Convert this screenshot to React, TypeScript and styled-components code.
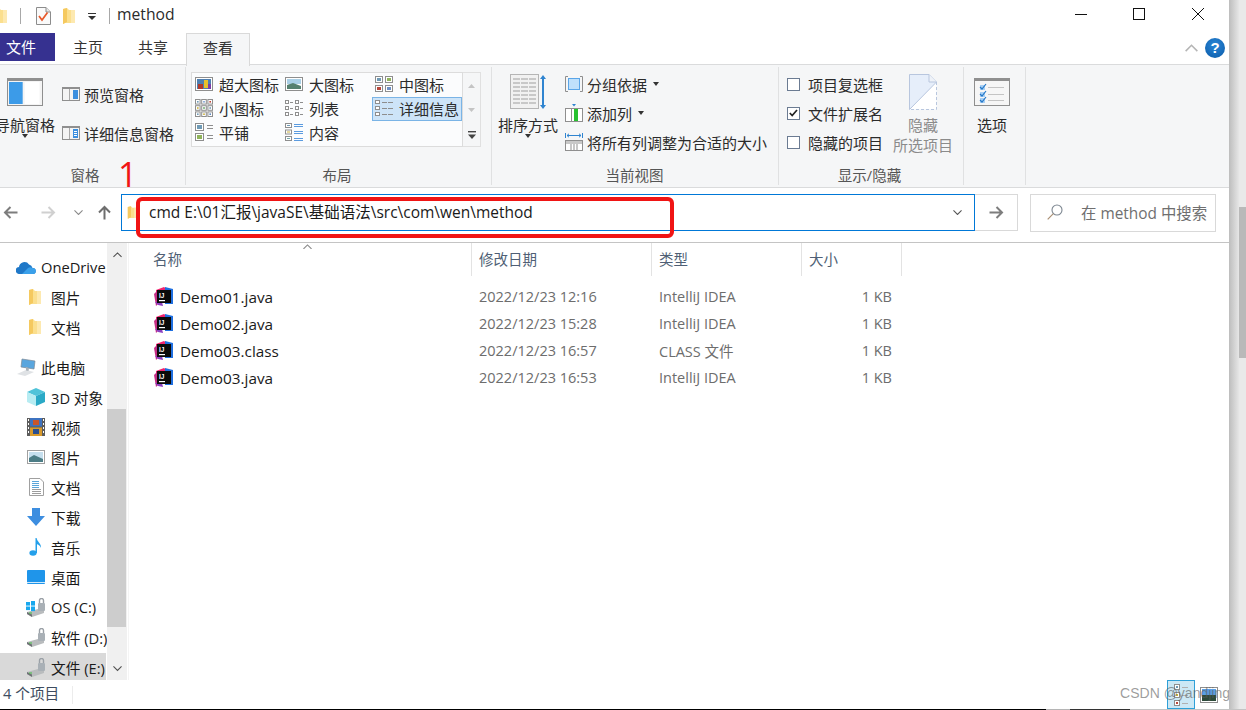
import React from "react";
import styled, { createGlobalStyle } from "styled-components";

const GlobalStyle = createGlobalStyle`
    html, body {
        margin: 0;
        padding: 0;
        background: #fff;
    }
    * {
        box-sizing: border-box;
    }
    svg {
        display: block;
        flex: none;
    }
`;

const Page = styled.div`
    width: 1246px;
    height: 710px;
    overflow: hidden;
    font-family: "Open Sans", "Noto Sans CJK SC", sans-serif;
    font-size: 14.5px;
    color: #222;
`;
const TopArea = styled.div`
    display: flex;
    height: 709px;
`;
const BottomLine = styled.div`
    height: 1px;
    background: linear-gradient(90deg, #000 0 1046px, #b5b5b5 1046px 1070px, #333 1070px 1130px, #c4c4c4 1130px);
`;
const Edge = styled.div`
    width: 17px;
    display: flex;
    background: #e9e9e9;
`;
const EdgeShadow = styled.div`
    width: 10px;
    background: linear-gradient(90deg, #bdbdbd, #e6e6e6);
`;
const EdgeThumb = styled.div`
    width: 7px;
    height: 151px;
    margin-top: 207px;
    background: #b9b9b9;
`;
const Window = styled.div`
    position: relative;
    width: 1229px;
    height: 709px;
    background: #fff;
    display: flex;
    flex-direction: column;
    overflow: hidden;
`;

/* title bar */
const TitleBar = styled.div`
    height: 32px;
    display: flex;
    align-items: center;
    flex: none;
`;
const TitleSep = styled.div<{ $ml: number }>`
    width: 1px;
    height: 16px;
    background: #a8a8a8;
    margin-left: ${(p) => p.$ml}px;
`;
const TitleSlot = styled.div<{ $ml: number }>`
    margin-left: ${(p) => p.$ml}px;
`;
const TitleText = styled.div`
    margin-left: 7px;
    padding-bottom: 4px;
    font-size: 15.7px;
    color: #2b2b2b;
`;
const WinButtons = styled.div`
    margin-left: auto;
    margin-right: 2px;
    display: flex;
    gap: 0;
`;
const WinButton = styled.div<{ $gap?: boolean }>`
    width: 58px;
    height: 28px;
    display: flex;
    align-items: center;
    justify-content: center;
    margin-top: -4px;
    margin-left: ${(p) => (p.$gap ? "1px" : "0")};
`;

/* tabs */
const TabRow = styled.div`
    height: 32px;
    flex: none;
    display: flex;
    align-items: flex-start;
    gap: 1px;
    position: relative;
    z-index: 1;
`;
const FileTab = styled.div`
    width: 55px;
    height: 28px;
    margin-top: 1px;
    background: #363190;
    color: #fff;
    padding-left: 6px;
    line-height: 28px;
    font-size: 15px;
`;
const Tab = styled.div<{ $active?: boolean }>`
    width: 64px;
    height: ${(p) => (p.$active ? "33px" : "28px")};
    margin-top: 1px;
    text-align: center;
    line-height: 29px;
    font-size: 15px;
    color: #333;
    background: ${(p) => (p.$active ? "#f5f6f7" : "transparent")};
    border: ${(p) => (p.$active ? "1px solid #d9d9d9" : "none")};
    border-bottom: none;
`;
const TabRight = styled.div`
    margin-left: auto;
    margin-right: 4px;
    display: flex;
    align-items: center;
    gap: 7px;
    height: 32px;
`;
const HelpBadge = styled.div`
    width: 20px;
    height: 20px;
    border-radius: 50%;
    background: radial-gradient(circle at 50% 35%, #2a86d6, #0a5aa8);
    color: #fff;
    font-family: "Liberation Sans", sans-serif;
    font-weight: 700;
    font-size: 15px;
    line-height: 20px;
    text-align: center;
`;

/* ribbon */
const Ribbon = styled.div`
    height: 124px;
    flex: none;
    display: flex;
    background: #f5f6f7;
    border-top: 1px solid #dadbdc;
    border-bottom: 1px solid #dadbdc;
`;
const Group = styled.div<{ $w: number }>`
    width: ${(p) => p.$w}px;
    display: flex;
    flex-direction: column;
    position: relative;
    &::after {
        content: "";
        position: absolute;
        right: 0;
        top: 2px;
        bottom: 2px;
        width: 1px;
        background: #e0e1e2;
    }
`;
const GroupBody = styled.div`
    height: 98px;
    display: flex;
    align-items: flex-start;
`;
const GroupLabel = styled.div<{ $pr: number }>`
    flex: 1;
    text-align: center;
    padding: 2px ${(p) => p.$pr}px 0 0;
    font-size: 14.5px;
    line-height: 22px;
    color: #555;
`;
const BigButton = styled.div<{ $ml: number; $muted?: boolean; $w?: number }>`
    width: ${(p) => p.$w ?? 60}px;
    margin-left: ${(p) => p.$ml}px;
    flex: none;
    display: flex;
    flex-direction: column;
    align-items: center;
    padding-top: 4px;
    font-size: 15px;
    line-height: 20px;
    white-space: nowrap;
    text-align: center;
    color: ${(p) => (p.$muted ? "#8b8b8b" : "#2b2b2b")};
`;
const BigIconSlot = styled.div`
    height: 46px;
    flex: none;
    display: flex;
    align-items: flex-start;
    justify-content: center;
`;
const Caret = styled.span`
    display: block;
    flex: none;
    width: 0;
    height: 0;
    border-left: 3.5px solid transparent;
    border-right: 3.5px solid transparent;
    border-top: 4px solid #333;
`;
const BigCaret = styled(Caret)`
    margin-top: -1px;
`;
const BigIconPad = styled.div<{ $top: number }>`
    padding-top: ${(p) => p.$top}px;
`;
const SmallCol = styled.div<{ $ml: number; $top: number; $gap: number }>`
    margin-left: ${(p) => p.$ml}px;
    padding-top: ${(p) => p.$top}px;
    display: flex;
    flex-direction: column;
    gap: ${(p) => p.$gap}px;
`;
const SmallRow = styled.div`
    height: 24px;
    display: flex;
    align-items: center;
    gap: 4px;
    padding-bottom: 2px;
    font-size: 15px;
    color: #2b2b2b;
    white-space: nowrap;
`;
const RowCaret = styled(Caret)`
    margin-left: 2px;
`;
const LayoutBox = styled.div`
    margin: 7px 0 0 5px;
    width: 272px;
    height: 75px;
    display: grid;
    grid-template-columns: repeat(3, 90px);
    grid-auto-rows: 24px;
    background: #fbfcfd;
    border: 1px solid #dcdcdc;
`;
const LayoutItem = styled.div<{ $selected?: boolean }>`
    display: flex;
    align-items: center;
    gap: 6px;
    padding: 0 0 2px 2px;
    font-size: 15px;
    color: #2b2b2b;
    white-space: nowrap;
    background: ${(p) => (p.$selected ? "#cde4f8" : "transparent")};
    border: 1px solid ${(p) => (p.$selected ? "#7ab4e6" : "transparent")};
`;
const LayoutScroll = styled.div`
    margin-top: 7px;
    width: 18px;
    height: 75px;
    display: grid;
    grid-template-rows: 25px 24px 26px;
    border: 1px solid #e0e0e0;
    border-left: none;
`;
const ScrollCell = styled.div`
    display: flex;
    align-items: center;
    justify-content: center;
`;
const CheckCol = styled.div`
    width: 105px;
    margin-left: 8px;
    flex: none;
    padding-top: 8px;
    display: flex;
    flex-direction: column;
    gap: 5px;
`;
const CheckRow = styled.div`
    height: 24px;
    display: flex;
    align-items: center;
    gap: 8px;
    padding-bottom: 2px;
    font-size: 15px;
    color: #2b2b2b;
    white-space: nowrap;
`;
const CheckBox = styled.span`
    display: flex;
    align-items: center;
    justify-content: center;
    flex: none;
    width: 13px;
    height: 13px;
    background: #fff;
    border: 1px solid #6b7b92;
`;

/* address row */
const AddressRow = styled.div`
    height: 55px;
    flex: none;
    display: flex;
    align-items: flex-start;
    padding-top: 6px;
    border-bottom: 1px solid #c4c4c4;
`;
const NavSlot = styled.div<{ $ml: number }>`
    margin-left: ${(p) => p.$ml}px;
    height: 37px;
    display: flex;
    align-items: center;
`;
const AddressBox = styled.div`
    margin-left: 9px;
    width: 854px;
    height: 37px;
    display: flex;
    align-items: center;
    border: 1px solid #0078d7;
    padding: 0 12px 0 5px;
`;
const AddressText = styled.div`
    margin-left: 11px;
    flex: 1;
    font-size: 15.5px;
    color: #1a1a1a;
    padding-bottom: 2px;
    white-space: nowrap;
`;
const GoButton = styled.div`
    width: 43px;
    height: 37px;
    display: flex;
    align-items: center;
    justify-content: center;
    border: 1px solid #d9d9d9;
    border-left: none;
`;
const SearchBox = styled.div`
    margin-left: 12px;
    width: 186px;
    height: 38px;
    display: flex;
    align-items: center;
    padding: 0 0 2px 16px;
    gap: 18px;
    border: 1px solid #d9d9d9;
    font-size: 15.4px;
    color: #6f6f6f;
    white-space: nowrap;
`;

/* main */
const Main = styled.div`
    height: 437px;
    flex: none;
    display: flex;
`;
const Sidebar = styled.div`
    width: 107px;
    flex: none;
    overflow: hidden;
    padding-top: 10px;
`;
const TreeRow = styled.div<{ $indent: number; $gap: number; $selected?: boolean; $space?: boolean }>`
    height: 30px;
    display: flex;
    align-items: center;
    padding: 0 0 2px ${(p) => p.$indent}px;
    gap: ${(p) => p.$gap}px;
    margin-top: ${(p) => (p.$space ? "10px" : "0")};
    font-size: 14.7px;
    color: #1a1a1a;
    white-space: nowrap;
    background: ${(p) => (p.$selected ? "#d9d9d9" : "transparent")};
    width: ${(p) => (p.$selected ? "106px" : "auto")};
`;
const IconBox = styled.div`
    width: 20px;
    display: flex;
    justify-content: center;
    flex: none;
`;
const Scrollbar = styled.div`
    width: 20px;
    flex: none;
    display: flex;
    flex-direction: column;
    background: #f0f0f0;
`;
const ScrollArrow = styled.div<{ $h: number }>`
    height: ${(p) => p.$h}px;
    display: flex;
    align-items: center;
    justify-content: center;
    padding-top: 2px;
`;
const ScrollThumb = styled.div`
    width: 19px;
    height: 218px;
    margin-top: 144px;
    margin-bottom: auto;
    background: #cdcdcd;
`;
const FileArea = styled.div`
    flex: 1;
    margin-left: 1px;
    border-left: 1px solid #f4f4f4;
`;
const HeaderRow = styled.div`
    position: relative;
    display: grid;
    grid-template-columns: 343px 180px 150px 100px;
    height: 32px;
    margin-bottom: 8px;
    font-size: 14.5px;
    color: #4f5f75;
`;
const HeaderCell = styled.div<{ $first?: boolean }>`
    padding-left: ${(p) => (p.$first ? "24px" : "7px")};
    line-height: 33px;
    border-right: 1px solid #e3e3e3;
`;
const SortMark = styled.div`
    position: absolute;
    left: 174px;
    top: 1px;
`;
const FileRow = styled.div`
    display: grid;
    grid-template-columns: 343px 180px 150px 90px;
    height: 27px;
    align-items: center;
    font-size: 14.5px;
    color: #6d6d6d;
`;
const NameCell = styled.div`
    display: flex;
    align-items: center;
    gap: 6px;
    padding-left: 25px;
    color: #1a1a1a;
    font-size: 15.3px;
`;
const DataCell = styled.div`
    padding-left: 7px;
    white-space: nowrap;
`;
const SizeCell = styled.div`
    text-align: right;
`;

/* status */
const StatusBar = styled.div`
    flex: 1;
    display: flex;
    align-items: center;
    padding: 0 11px 0 3px;
    font-size: 14.7px;
    color: #3d4c60;
`;
const StatusText = styled.div`
    padding-bottom: 4px;
`;
const StatusSep = styled.div`
    width: 1px;
    height: 18px;
    background: #ececec;
    margin-left: 13px;
`;
const ViewToggle = styled.div`
    margin-left: auto;
    width: 28px;
    height: 29px;
    display: flex;
    align-items: center;
    justify-content: center;
    background: #cce8f5;
    border: 1px solid #2ea0d8;
`;
const ViewPlain = styled.div`
    margin-left: 5px;
    width: 18px;
    display: flex;
    justify-content: center;
`;

/* things drawn over the screenshot */
const RedBox = styled.div`
    position: absolute;
    left: 136px;
    top: 197px;
    width: 538px;
    height: 41px;
    border: 4px solid #f01414;
    border-radius: 6px;
    pointer-events: none;
`;
const RedNumber = styled.div`
    position: absolute;
    left: 118px;
    top: 155px;
    font-family: "Open Sans", sans-serif;
    font-size: 34px;
    line-height: 38px;
    color: #f01414;
`;
const Watermark = styled.div`
    position: absolute;
    right: -1px;
    top: 684px;
    font-family: "Liberation Sans", sans-serif;
    font-size: 14px;
    line-height: 18px;
    color: rgba(90, 90, 90, 0.6);
    white-space: nowrap;
`;

/* icons */
function Folder({ w = 14, h = 16 }: { w?: number; h?: number }) {
    return (
        <svg width={w} height={h} viewBox="0 0 14 16">
            <path d="M1 1 L5 0 L7 2 L13 2 V15 H3 L1 16 Z" fill="#fbdf8e" />
            <path d="M1 1 L5 0 V14 L1 16 Z" fill="#f5c95f" />
            <path d="M9 2 H13 V15 H9 Z" fill="#fde9b0" />
        </svg>
    );
}

function NoteCheck() {
    return (
        <svg width="15" height="18" viewBox="0 0 15 18">
            <path d="M.5.5 H10 L14.5 5 V17.5 H.5 Z" fill="#fafafa" stroke="#8c8c8c" />
            <path d="M10 .5 V5 H14.5" fill="#e8e8e8" stroke="#8c8c8c" />
            <path d="M3 9 L6 13 L11.5 5.5" fill="none" stroke="#e8592b" strokeWidth="1.7" />
        </svg>
    );
}

function PaneIcon({ w, h, side }: { w: number; h: number; side: "left" | "right" | "detail" }) {
    const top = h > 20 ? 3 : 2;
    return (
        <svg width={w} height={h} viewBox={`0 0 ${w} ${h}`}>
            <rect x=".5" y=".5" width={w - 1} height={h - 1} fill="#f4f4f4" stroke="#8f8f8f" />
            <rect x="0" y="0" width={w} height={top} fill="#8f8f8f" />
            {side === "left" && <rect x="2" y={top + 1} width={w * 0.38} height={h - top - 3} fill="#3c9be8" />}
            {side === "left" && <rect x={w * 0.38 + 4} y={top + 1} width={w * 0.58 - 6} height={h - top - 3} fill="#fff" />}
            {side !== "left" && <rect x="7" y={top} width="1" height={h - top - 1} fill="#a9a9a9" />}
            {side !== "left" && <rect x={w - 7} y={top + 1} width="5" height={h - top - 3} fill="#3c8fdf" />}
            {side === "detail" && <rect x={w - 6} y={top + 3} width="3" height="1" fill="#fff" />}
            {side === "detail" && <rect x={w - 6} y={top + 5} width="3" height="1" fill="#fff" />}
            {side === "detail" && <rect x={w - 6} y={top + 7} width="3" height="1" fill="#fff" />}
        </svg>
    );
}

function Pic({ x, y, w, h, c }: { x: number; y: number; w: number; h: number; c: string }) {
    return (
        <g>
            <rect x={x + 0.5} y={y + 0.5} width={w - 1} height={h - 1} fill="#fff" stroke="#8e8e8e" />
            <rect x={x + 2} y={y + 2} width={w - 4} height={h - 4} fill={c} />
        </g>
    );
}

const lineColor = "#8e8e8e";
function Lines({ x, ys, w, c = lineColor }: { x: number; ys: number[]; w: number; c?: string }) {
    return (
        <g>
            {ys.map((y) => (
                <rect key={y} x={x} y={y} width={w} height="1" fill={c} />
            ))}
        </g>
    );
}

function HugeIcon() {
    return (
        <svg width="18" height="14" viewBox="0 0 18 14">
            <rect x=".5" y=".5" width="17" height="13" fill="#fff" stroke="#8e8e8e" />
            <rect x="2" y="2" width="14" height="10" fill="#4f7fb0" />
            <rect x="3" y="7" width="5" height="5" fill="#b0392c" />
            <rect x="9" y="3" width="4" height="8" fill="#e8c12c" />
            <rect x="13" y="7" width="3" height="5" fill="#7a3ea8" />
        </svg>
    );
}
function LargeIcon() {
    return (
        <svg width="18" height="14" viewBox="0 0 18 14">
            <rect x=".5" y=".5" width="17" height="13" fill="#fff" stroke="#8e8e8e" />
            <rect x="2" y="2" width="14" height="5" fill="#a9cfe6" />
            <path d="M2 8 L8 6 L16 9 V12 H2 Z" fill="#55806f" />
        </svg>
    );
}
function MediumIcon() {
    return (
        <svg width="18" height="16" viewBox="0 0 18 16">
            <Pic x={0} y={0} w={8} h={7} c="#6f9ab5" />
            <Pic x={10} y={0} w={8} h={7} c="#8fb35a" />
            <Pic x={0} y={9} w={8} h={7} c="#b8483c" />
            <Pic x={10} y={9} w={8} h={7} c="#6d8fc5" />
        </svg>
    );
}
function SmallIcon() {
    const cells = ["#6f9ab5", "#7b9fd0", "#c0463a", "#c9b03a", "#5aa05a", "#6f9ab5", "#6f9ab5", "#c9b03a", "#5d88c0"];
    return (
        <svg width="18" height="18" viewBox="0 0 18 18">
            {cells.map((c, i) => (
                <Pic key={i} x={(i % 3) * 6.2} y={Math.floor(i / 3) * 6.2} w={5.6} h={5.6} c={c} />
            ))}
        </svg>
    );
}
function ListIcon() {
    return (
        <svg width="18" height="16" viewBox="0 0 18 16">
            {[0, 10].map((x) => (
                <g key={x}>
                    <Pic x={x} y={0} w={4} h={4} c="#7aa" />
                    <Pic x={x} y={6} w={4} h={4} c="#c9b03a" />
                    <Pic x={x} y={12} w={4} h={4} c="#b8483c" />
                    <Lines x={x + 5} ys={[2, 8, 14]} w={3} />
                </g>
            ))}
        </svg>
    );
}
function DetailIcon() {
    return (
        <svg width="18" height="16" viewBox="0 0 18 16">
            <Pic x={0} y={0} w={5} h={4} c="#7aa" />
            <Pic x={0} y={6} w={5} h={4} c="#c9b03a" />
            <Pic x={0} y={12} w={5} h={4} c="#b8483c" />
            <Lines x={7} ys={[2, 8, 14]} w={5} />
            <Lines x={13} ys={[2, 8, 14]} w={5} />
        </svg>
    );
}
function TileIcon() {
    return (
        <svg width="18" height="18" viewBox="0 0 18 18">
            <Pic x={0} y={0} w={9} h={8} c="#6f9ab5" />
            <Pic x={0} y={10} w={9} h={8} c="#8fb35a" />
            <Lines x={12} ys={[2, 5, 12, 15]} w={6} />
        </svg>
    );
}
function ContentIcon() {
    return (
        <svg width="18" height="18" viewBox="0 0 18 18">
            <Pic x={0} y={0} w={7} h={5} c="#6f9ab5" />
            <Pic x={0} y={6.5} w={7} h={5} c="#c9b03a" />
            <Pic x={0} y={13} w={7} h={5} c="#7aa" />
            <Lines x={9} ys={[1, 3, 8, 10, 15, 17]} w={9} c="#5b9bdf" />
        </svg>
    );
}

function SortIcon() {
    return (
        <svg width="36" height="36" viewBox="0 0 36 36">
            <rect x=".5" y=".5" width="28" height="34" fill="#f1f1f1" stroke="#b5b5b5" />
            {[4, 8, 12, 16, 20, 24, 28].map((y) => (
                <g key={y}>
                    <rect x="3" y={y} width="7" height="2" fill="#c8c8c8" />
                    <rect x="11" y={y} width="7" height="2" fill="#c8c8c8" />
                    <rect x="19" y={y} width="7" height="2" fill="#c8c8c8" />
                </g>
            ))}
            <path d="M33 1 L36 5 H34 V31 H36 L33 35 L30 31 H32 V5 H30 Z" fill="#2f84d0" />
        </svg>
    );
}
function GroupByIcon() {
    return (
        <svg width="18" height="16" viewBox="0 0 18 16">
            <path d="M3 .5 H.5 V15.5 H3 M15 .5 H17.5 V15.5 H15" fill="none" stroke="#8f8f8f" />
            <rect x="3.5" y="2.5" width="11" height="11" fill="#bfe0fb" stroke="#5aa5e8" />
        </svg>
    );
}
function AddColumnIcon() {
    return (
        <svg width="18" height="18" viewBox="0 0 18 18">
            <path d="M7 0 H11 L9 2.5 Z" fill="#2f84d0" />
            <rect x=".5" y="4.5" width="17" height="13" fill="#fff" stroke="#8f8f8f" />
            <rect x="9" y="5" width="4" height="12" fill="#27c12f" />
            <rect x="6" y="5" width="1" height="12" fill="#8f8f8f" />
        </svg>
    );
}
function FitColumnsIcon() {
    return (
        <svg width="18" height="18" viewBox="0 0 18 18">
            <path d="M.5 0 V5 M17.5 0 V5 M2 2.5 H16 M4 .8 L2 2.5 L4 4.2 M14 .8 L16 2.5 L14 4.2" fill="none" stroke="#2f84d0" />
            <rect x=".5" y="7.5" width="17" height="10" fill="#fff" stroke="#8f8f8f" />
            <rect x="1" y="8" width="16" height="3" fill="#c8c8c8" />
            <path d="M6 11 V17 M9 11 V17 M12 11 V17" stroke="#8f8f8f" />
        </svg>
    );
}
function HiddenPageIcon() {
    return (
        <svg width="28" height="36" viewBox="0 0 28 36">
            <path d="M.5 35.5 V.5 H20 L27.5 8 V35.5 Z" fill="#e6eefa" />
            <path d="M.5 35.5 L27.5 8 V35.5 Z" fill="#fff" />
            <path d="M.5 35.5 V.5 H20 L27.5 8" fill="none" stroke="#b8c6de" />
            <path d="M27.5 8 V35.5 H.5" fill="none" stroke="#b8c6de" strokeDasharray="3 2" />
            <path d="M20 .5 V8 H27.5" fill="#eef2f8" stroke="#b8c6de" />
            <path d="M.5 35.5 L27.5 8" stroke="#b8c6de" />
        </svg>
    );
}
function OptionsIcon() {
    return (
        <svg width="36" height="28" viewBox="0 0 36 28">
            <rect x=".5" y=".5" width="35" height="27" fill="#f6f6f6" stroke="#8f8f8f" />
            <rect x="0" y="0" width="36" height="3" fill="#8f8f8f" />
            {[7, 14, 20].map((y) => (
                <g key={y}>
                    <rect x="6" y={y} width="5" height="5" fill="#a8d0f5" />
                    <path d={`M6 ${y + 2} L8 ${y + 4} L12 ${y - 1}`} fill="none" stroke="#2678c8" strokeWidth="1.2" />
                    <rect x="14" y={y + 2} width="16" height="1" fill="#c4c4c4" />
                </g>
            ))}
        </svg>
    );
}

function ArrowIcon({ dir, color }: { dir: "left" | "right" | "up"; color: string }) {
    const rot = dir === "left" ? 0 : dir === "right" ? 180 : 90;
    return (
        <svg width="15" height="15" viewBox="0 0 15 15">
            <path
                d="M14.5 7.5 H2 M7.5 2 L2 7.5 L7.5 13"
                fill="none"
                stroke={color}
                strokeWidth="2"
                transform={`rotate(${rot} 7.5 7.5)`}
            />
        </svg>
    );
}
function Chevron({ up, color = "#6a6a6a", w = 9 }: { up?: boolean; color?: string; w?: number }) {
    return (
        <svg width={w} height={w * 0.6} viewBox="0 0 10 6">
            <path d={up ? "M.5 5.5 L5 1 L9.5 5.5" : "M.5 .5 L5 5 L9.5 .5"} fill="none" stroke={color} strokeWidth="1.2" />
        </svg>
    );
}
function SearchIcon() {
    return (
        <svg width="16" height="16" viewBox="0 0 16 16">
            <circle cx="10" cy="6" r="5" fill="none" stroke="#7d8791" strokeWidth="1.1" />
            <path d="M6.3 9.7 L.7 15.3" stroke="#a98f73" strokeWidth="1.2" />
        </svg>
    );
}
function IdeaIcon() {
    return (
        <svg width="20" height="20" viewBox="0 0 20 20">
            <path d="M2 3 L10 0 L14 3 L2 12 Z" fill="#f0246e" />
            <path d="M0 7 L4 3 L5 16 L2 19 Z" fill="#c42f86" />
            <path d="M11 0 L19 2 L19 17 L11 17 Z" fill="#1f6fe0" />
            <path d="M1 15 L4 18 L9 19 L8 15 Z" fill="#8a3fc0" />
            <rect x="3" y="3" width="14" height="13" fill="#0a0a0a" />
            <text x="5" y="10.5" fontFamily="Liberation Sans, sans-serif" fontSize="6.5" fontWeight="700" fill="#fff">
                IJ
            </text>
            <rect x="5" y="13" width="6" height="1.2" fill="#fff" />
        </svg>
    );
}
function CloudIcon() {
    return (
        <svg width="20" height="13" viewBox="0 0 20 13">
            <path d="M3.5 13 A3.5 3.5 0 0 1 3 6 A5.5 5.5 0 0 1 13 3.5 A4.5 4.5 0 0 1 16.5 7 A3 3 0 0 1 17 13 Z" fill="#1f78c8" />
            <path d="M6 13 L12 7 A4 4 0 0 1 16.5 7 A3 3 0 0 1 17 13 Z" fill="#3aa0ea" />
        </svg>
    );
}
function PcIcon() {
    return (
        <svg width="20" height="18" viewBox="0 0 20 18">
            <path d="M6 1 L19 3 L18 11 L5 9 Z" fill="#5aa6de" stroke="#7d8a96" strokeWidth=".7" />
            <path d="M1 16 L10 12 L18 14 L9 18 Z" fill="#dfe2e5" />
            <path d="M10 9 L13 10 L12.5 13 L10 12.5 Z" fill="#a9b1b8" />
        </svg>
    );
}
function CubeIcon() {
    return (
        <svg width="18" height="18" viewBox="0 0 18 18">
            <path d="M9 0 L18 4 L9 8 L0 4 Z" fill="#4fc3d9" />
            <path d="M0 4 L9 8 V18 L0 14 Z" fill="#b7ecf2" />
            <path d="M18 4 L9 8 V18 L18 14 Z" fill="#2aa9c6" />
        </svg>
    );
}
function VideoIcon() {
    return (
        <svg width="18" height="18" viewBox="0 0 18 18">
            <rect width="18" height="18" fill="#5c5c5c" />
            <rect x="3" y="0" width="12" height="8.5" fill="#3e73c0" />
            <rect x="3" y="9.5" width="12" height="8.5" fill="#d89a2c" />
            <rect x="6" y="2" width="6" height="5" fill="#c9562c" />
            <rect x="6" y="11" width="6" height="5" fill="#2a4f90" />
            {[1, 5, 9, 13].map((y) => (
                <g key={y}>
                    <rect x="1" y={y} width="1" height="2" fill="#fff" />
                    <rect x="16" y={y} width="1" height="2" fill="#fff" />
                </g>
            ))}
        </svg>
    );
}
function PictureIcon() {
    return (
        <svg width="18" height="14" viewBox="0 0 18 14">
            <rect x=".5" y=".5" width="17" height="13" fill="#fff" stroke="#a0a0a0" />
            <rect x="2" y="2" width="14" height="10" fill="#c5dfee" />
            <path d="M2 8 L7 5 L16 9 V12 H2 Z" fill="#4c7d86" />
        </svg>
    );
}
function DocIcon() {
    return (
        <svg width="15" height="18" viewBox="0 0 15 18">
            <path d="M.5.5 H11 L14.5 4 V17.5 H.5 Z" fill="#fff" stroke="#a0a0a0" />
            <Lines x={3} ys={[3, 5, 7, 9]} w={7} c="#5ba5d8" />
            <Lines x={3} ys={[11, 13, 15]} w={9} c="#9c9c9c" />
        </svg>
    );
}
function DownloadIcon() {
    return (
        <svg width="18" height="18" viewBox="0 0 18 18">
            <path d="M5 0 H13 V8 H18 L9 18 L0 8 H5 Z" fill="#3d8ee0" />
        </svg>
    );
}
function MusicIcon() {
    return (
        <svg width="14" height="18" viewBox="0 0 14 18">
            <ellipse cx="4" cy="15" rx="3.6" ry="2.8" fill="#24a0ea" />
            <path d="M6.5 15 V0 H7.6 C8 4 12.5 5 12 10 C11 7 9 6.5 8 6.2 V15 Z" fill="#24a0ea" />
        </svg>
    );
}
function DesktopIcon() {
    return (
        <svg width="18" height="14" viewBox="0 0 18 14">
            <rect width="18" height="14" rx="1" fill="#1f95ea" />
            <rect x="0" y="12" width="18" height="1" fill="#cfe9fb" />
        </svg>
    );
}
function DriveIcon({ windows }: { windows?: boolean }) {
    return (
        <svg width="20" height="19" viewBox="0 0 20 19">
            <path d="M1 14 L12 11 L18 13 V15 L6 19 L1 16 Z" fill="#b9bcbe" />
            <path d="M1 14 L6 16.5 V19 L1 16 Z" fill="#6f7275" />
            <rect x="3" y="14.5" width="3" height="1" fill="#47c447" />
            <rect x="12" y="5" width="7" height="8" rx="1" fill="#a9b0b6" />
            <path d="M13.5 5 V2.5 A2 2 0 0 1 17.5 2.5 V5" fill="none" stroke="#9aa0a6" strokeWidth="1.4" />
            {windows && (
                <g fill="#19a8ee">
                    <rect x="0" y="4" width="4" height="3.6" />
                    <rect x="5" y="3" width="4" height="4.6" />
                    <rect x="0" y="8.5" width="4" height="3.6" />
                    <rect x="5" y="8.5" width="4" height="4.6" />
                </g>
            )}
        </svg>
    );
}
function ToggleDetail() {
    return (
        <svg width="14" height="22" viewBox="0 0 14 22">
            <Pic x={0} y={0} w={6} h={6} c="#6f9ab5" />
            <Pic x={0} y={8} w={6} h={6} c="#c9b03a" />
            <Pic x={0} y={16} w={6} h={6} c="#b8483c" />
            <Lines x={8} ys={[3, 11, 19]} w={6} c="#b0b0b0" />
        </svg>
    );
}
function ToggleThumb() {
    return (
        <svg width="18" height="16" viewBox="0 0 18 16">
            <rect x=".5" y=".5" width="17" height="15" fill="#fff" stroke="#8e8e8e" />
            <rect x="2" y="2" width="14" height="6" fill="#5a9fe6" />
            <rect x="2" y="8" width="14" height="6" fill="#2d4a3a" />
        </svg>
    );
}

const layoutItems: { label: string; icon: React.ReactNode; selected?: boolean }[] = [
    { label: "超大图标", icon: <HugeIcon /> },
    { label: "大图标", icon: <LargeIcon /> },
    { label: "中图标", icon: <MediumIcon /> },
    { label: "小图标", icon: <SmallIcon /> },
    { label: "列表", icon: <ListIcon /> },
    { label: "详细信息", icon: <DetailIcon />, selected: true },
    { label: "平铺", icon: <TileIcon /> },
    { label: "内容", icon: <ContentIcon /> },
];

const treeItems: { label: string; icon: React.ReactNode; indent: number; gap: number; selected?: boolean; space?: boolean }[] = [
    { label: "OneDrive", icon: <CloudIcon />, indent: 16, gap: 5 },
    { label: "图片", icon: <Folder />, indent: 25, gap: 6 },
    { label: "文档", icon: <Folder />, indent: 25, gap: 6 },
    { label: "此电脑", icon: <PcIcon />, indent: 16, gap: 5, space: true },
    { label: "3D 对象", icon: <CubeIcon />, indent: 26, gap: 5 },
    { label: "视频", icon: <VideoIcon />, indent: 26, gap: 5 },
    { label: "图片", icon: <PictureIcon />, indent: 26, gap: 5 },
    { label: "文档", icon: <DocIcon />, indent: 26, gap: 5 },
    { label: "下载", icon: <DownloadIcon />, indent: 26, gap: 5 },
    { label: "音乐", icon: <MusicIcon />, indent: 26, gap: 5 },
    { label: "桌面", icon: <DesktopIcon />, indent: 26, gap: 5 },
    { label: "OS (C:)", icon: <DriveIcon windows />, indent: 26, gap: 5 },
    { label: "软件 (D:)", icon: <DriveIcon />, indent: 26, gap: 5 },
    { label: "文件 (E:)", icon: <DriveIcon />, indent: 26, gap: 5, selected: true },
];

const files = [
    { name: "Demo01.java", date: "2022/12/23 12:16", type: "IntelliJ IDEA" },
    { name: "Demo02.java", date: "2022/12/23 15:28", type: "IntelliJ IDEA" },
    { name: "Demo03.class", date: "2022/12/23 16:57", type: "CLASS 文件" },
    { name: "Demo03.java", date: "2022/12/23 16:53", type: "IntelliJ IDEA" },
];

export default function App() {
    return (
        <Page>
            <GlobalStyle />
            <TopArea>
                <Window>
                    <TitleBar>
                        <TitleSlot $ml={-6}>
                            <Folder />
                        </TitleSlot>
                        <TitleSep $ml={12} />
                        <TitleSlot $ml={15}>
                            <NoteCheck />
                        </TitleSlot>
                        <TitleSlot $ml={11}>
                            <Folder />
                        </TitleSlot>
                        <TitleSlot $ml={12}>
                            <svg width="8" height="7" viewBox="0 0 8 7">
                                <rect x="0" y="0" width="8" height="1" fill="#333" />
                                <path d="M0 3 H8 L4 7 Z" fill="#333" />
                            </svg>
                        </TitleSlot>
                        <TitleSep $ml={13} />
                        <TitleText>method</TitleText>
                        <WinButtons>
                            <WinButton>
                                <svg width="12" height="1">
                                    <rect width="12" height="1" fill="#111" />
                                </svg>
                            </WinButton>
                            <WinButton>
                                <svg width="12" height="12">
                                    <rect x=".5" y=".5" width="11" height="11" fill="none" stroke="#111" />
                                </svg>
                            </WinButton>
                            <WinButton $gap>
                                <svg width="12" height="12">
                                    <path d="M0 0 L12 12 M12 0 L0 12" stroke="#111" />
                                </svg>
                            </WinButton>
                        </WinButtons>
                    </TitleBar>

                    <TabRow>
                        <FileTab>文件</FileTab>
                        <Tab>主页</Tab>
                        <Tab>共享</Tab>
                        <Tab $active>查看</Tab>
                        <TabRight>
                            <Chevron up color="#b5b5b5" w={13} />
                            <HelpBadge>?</HelpBadge>
                        </TabRight>
                    </TabRow>

                    <Ribbon>
                        <Group $w={186}>
                            <GroupBody>
                                <BigButton $ml={-5}>
                                    <BigIconSlot>
                                        <BigIconPad $top={9}>
                                            <PaneIcon w={36} h={28} side="left" />
                                        </BigIconPad>
                                    </BigIconSlot>
                                    导航窗格
                                    <BigCaret />
                                </BigButton>
                                <SmallCol $ml={7} $top={18} $gap={15}>
                                    <SmallRow>
                                        <PaneIcon w={18} h={14} side="right" />
                                        预览窗格
                                    </SmallRow>
                                    <SmallRow>
                                        <PaneIcon w={18} h={14} side="detail" />
                                        详细信息窗格
                                    </SmallRow>
                                </SmallCol>
                            </GroupBody>
                            <GroupLabel $pr={16}>窗格</GroupLabel>
                        </Group>

                        <Group $w={306}>
                            <GroupBody>
                                <LayoutBox>
                                    {layoutItems.map((item) => (
                                        <LayoutItem key={item.label} $selected={item.selected}>
                                            {item.icon}
                                            {item.label}
                                        </LayoutItem>
                                    ))}
                                </LayoutBox>
                                <LayoutScroll>
                                    <ScrollCell>
                                        <svg width="7" height="4">
                                            <path d="M0 4 H7 L3.5 0 Z" fill="#c4c4c4" />
                                        </svg>
                                    </ScrollCell>
                                    <ScrollCell>
                                        <svg width="7" height="4">
                                            <path d="M0 0 H7 L3.5 4 Z" fill="#c4c4c4" />
                                        </svg>
                                    </ScrollCell>
                                    <ScrollCell>
                                        <svg width="8" height="8">
                                            <rect width="8" height="1.4" fill="#444" />
                                            <path d="M0 3.5 H8 L4 8 Z" fill="#444" />
                                        </svg>
                                    </ScrollCell>
                                </LayoutScroll>
                            </GroupBody>
                            <GroupLabel $pr={4}>布局</GroupLabel>
                        </Group>

                        <Group $w={287}>
                            <GroupBody>
                                <BigButton $ml={6}>
                                    <BigIconSlot>
                                        <BigIconPad $top={5}>
                                            <SortIcon />
                                        </BigIconPad>
                                    </BigIconSlot>
                                    排序方式
                                    <BigCaret />
                                </BigButton>
                                <SmallCol $ml={7} $top={8} $gap={5}>
                                    <SmallRow>
                                        <GroupByIcon />
                                        分组依据
                                        <RowCaret />
                                    </SmallRow>
                                    <SmallRow>
                                        <AddColumnIcon />
                                        添加列
                                        <RowCaret />
                                    </SmallRow>
                                    <SmallRow>
                                        <FitColumnsIcon />
                                        将所有列调整为合适的大小
                                    </SmallRow>
                                </SmallCol>
                            </GroupBody>
                            <GroupLabel $pr={2}>当前视图</GroupLabel>
                        </Group>

                        <Group $w={185}>
                            <GroupBody>
                                <CheckCol>
                                    <CheckRow>
                                        <CheckBox />
                                        项目复选框
                                    </CheckRow>
                                    <CheckRow>
                                        <CheckBox>
                                            <svg width="9" height="8" viewBox="0 0 9 8">
                                                <path d="M.8 4 L3.2 6.5 L8 1" fill="none" stroke="#222" strokeWidth="1.7" />
                                            </svg>
                                        </CheckBox>
                                        文件扩展名
                                    </CheckRow>
                                    <CheckRow>
                                        <CheckBox />
                                        隐藏的项目
                                    </CheckRow>
                                </CheckCol>
                                <BigButton $ml={1} $muted>
                                    <BigIconSlot>
                                        <BigIconPad $top={5}>
                                            <HiddenPageIcon />
                                        </BigIconPad>
                                    </BigIconSlot>
                                    <div>
                                        隐藏
                                        <br />
                                        所选项目
                                    </div>
                                </BigButton>
                            </GroupBody>
                            <GroupLabel $pr={4}>显示/隐藏</GroupLabel>
                        </Group>

                        <Group $w={62}>
                            <GroupBody>
                                <BigButton $ml={0} $w={56}>
                                    <BigIconSlot>
                                        <BigIconPad $top={9}>
                                            <OptionsIcon />
                                        </BigIconPad>
                                    </BigIconSlot>
                                    选项
                                </BigButton>
                            </GroupBody>
                        </Group>
                    </Ribbon>

                    <AddressRow>
                        <NavSlot $ml={3}>
                            <ArrowIcon dir="left" color="#7d7d7d" />
                        </NavSlot>
                        <NavSlot $ml={23}>
                            <ArrowIcon dir="right" color="#d0d0d0" />
                        </NavSlot>
                        <NavSlot $ml={18}>
                            <Chevron color="#8a8a8a" />
                        </NavSlot>
                        <NavSlot $ml={14}>
                            <ArrowIcon dir="up" color="#6e6e6e" />
                        </NavSlot>
                        <AddressBox>
                            <Folder w={11} h={15} />
                            <AddressText>cmd E:\01汇报\javaSE\基础语法\src\com\wen\method</AddressText>
                            <Chevron color="#555" />
                        </AddressBox>
                        <GoButton>
                            <ArrowIcon dir="right" color="#7d7d7d" />
                        </GoButton>
                        <SearchBox>
                            <SearchIcon />在 method 中搜索
                        </SearchBox>
                    </AddressRow>

                    <Main>
                        <Sidebar>
                            {treeItems.map((item, i) => (
                                <TreeRow key={i} $indent={item.indent} $gap={item.gap} $selected={item.selected} $space={item.space}>
                                    <IconBox>{item.icon}</IconBox>
                                    {item.label}
                                </TreeRow>
                            ))}
                        </Sidebar>
                        <Scrollbar>
                            <ScrollArrow $h={22}>
                                <Chevron up color="#505050" />
                            </ScrollArrow>
                            <ScrollThumb />
                            <ScrollArrow $h={24}>
                                <Chevron color="#505050" />
                            </ScrollArrow>
                        </Scrollbar>
                        <FileArea>
                            <HeaderRow>
                                <HeaderCell $first>名称</HeaderCell>
                                <HeaderCell>修改日期</HeaderCell>
                                <HeaderCell>类型</HeaderCell>
                                <HeaderCell>大小</HeaderCell>
                                <SortMark>
                                    <Chevron up color="#8a8a8a" />
                                </SortMark>
                            </HeaderRow>
                            {files.map((file) => (
                                <FileRow key={file.name}>
                                    <NameCell>
                                        <IdeaIcon />
                                        {file.name}
                                    </NameCell>
                                    <DataCell>{file.date}</DataCell>
                                    <DataCell>{file.type}</DataCell>
                                    <SizeCell>1 KB</SizeCell>
                                </FileRow>
                            ))}
                        </FileArea>
                    </Main>

                    <StatusBar>
                        <StatusText>4 个项目</StatusText>
                        <StatusSep />
                        <ViewToggle>
                            <ToggleDetail />
                        </ViewToggle>
                        <ViewPlain>
                            <ToggleThumb />
                        </ViewPlain>
                    </StatusBar>

                    <RedNumber>1</RedNumber>
                    <RedBox />
                    <Watermark>CSDN @yandjing</Watermark>
                </Window>
                <Edge>
                    <EdgeShadow />
                    <EdgeThumb />
                </Edge>
            </TopArea>
            <BottomLine />
        </Page>
    );
}
